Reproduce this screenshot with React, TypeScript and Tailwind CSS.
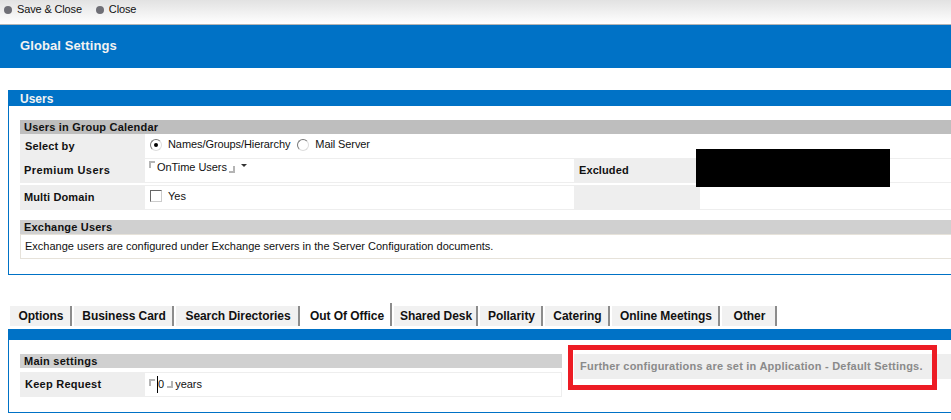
function CornerOpen() {
  return <span className="mb-[5px] mr-[2px] inline-block h-[7px] w-[6px] border-t-2 border-l-2 border-[#b4b4b4]" />;
}

function CornerClose() {
  return <span className="mt-[5px] ml-[2px] inline-block h-[7px] w-[6px] border-r-2 border-b-2 border-[#b4b4b4]" />;
}

function Radio({ checked }: { checked?: boolean }) {
  return (
    <span className="flex h-[12px] w-[12px] items-center justify-center rounded-full border border-t-[#777] border-l-[#777] border-r-[#ddd] border-b-[#ddd] bg-white">
      {checked && <span className="h-[4px] w-[4px] rounded-full bg-black" />}
    </span>
  );
}

const tabs = [
  { label: "Options", width: "w-[62px]" },
  { label: "Business Card", width: "w-[100px]" },
  { label: "Search Directories", width: "w-[124px]" },
  { label: "Out Of Office", width: "w-[90px]", active: true },
  { label: "Shared Desk", width: "w-[84px]" },
  { label: "Pollarity", width: "w-[63px]" },
  { label: "Catering", width: "w-[65px]" },
  { label: "Online Meetings", width: "w-[108px]" },
  { label: "Other", width: "w-[55px]" },
];

export default function App() {
  return (
    <div className="relative h-[420px] w-[951px] overflow-hidden bg-white font-['Liberation_Sans',Arial,sans-serif] text-[11px] text-[#111]">
      {/* Toolbar */}
      <div className="flex h-[25px] items-center border-b border-[#b5b5b5] bg-gradient-to-b from-[#e2e2e2] to-white pb-[5px] pl-[4px]">
        <span className="h-[8px] w-[8px] rounded-full bg-[#6f6f76]" />
        <span className="ml-[5px] tracking-[-0.15px]">Save &amp; Close</span>
        <span className="ml-[14px] h-[8px] w-[8px] rounded-full bg-[#6f6f76]" />
        <span className="ml-[5px] tracking-[-0.15px]">Close</span>
      </div>
      <div className="flex h-[43px] items-center bg-[#0072c6] pb-[1px] pl-[20px] text-[13px] font-bold tracking-[0.1px] text-[#f2f2f2]">
        Global Settings
      </div>

      {/* Users panel */}
      <div className="mt-[22px] ml-[8px] h-[185px] w-[960px] border-x border-b border-[#0072c6]">
        <div className="flex h-[16px] items-center bg-[#0072c6] pt-[1px] pl-[11px] text-[12px] font-bold text-[#f2f2f2]">Users</div>
        <div className="mt-[14px] ml-[11px]">
          <div className="flex h-[14px] items-center bg-[#bebebe] pl-[4px] font-bold tracking-[0.2px]">Users in Group Calendar</div>
          <div className="flex h-[24px]">
            <div className="flex w-[125px] items-center bg-[#eee] pl-[5px] font-bold tracking-[0.15px]">Select by</div>
            <div className="flex flex-1 items-center pb-[3px] pl-[5px]">
              <Radio checked />
              <span className="ml-[6px] tracking-[-0.08px]">Names/Groups/Hierarchy</span>
              <span className="ml-[7px]"><Radio /></span>
              <span className="ml-[6px] tracking-[-0.1px]">Mail Server</span>
            </div>
          </div>
          <div className="flex h-[25px]">
            <div className="flex w-[125px] items-center bg-[#eee] pl-[4px] font-bold tracking-[0.42px]">Premium Users</div>
            <div className="flex w-[429px] items-start border-y border-[#eee] pl-[4px]">
              <span className="flex items-center">
                <CornerOpen />
                <span className="tracking-[-0.05px]">OnTime Users</span>
                <CornerClose />
              </span>
              <span className="mt-[5px] ml-[6px] h-0 w-0 border-x-[3px] border-t-[3px] border-x-transparent border-t-[#333]" />
            </div>
            <div className="flex w-[126px] items-center bg-[#eee] pl-[5px] font-bold tracking-[0.1px]">Excluded</div>
            <div className="flex-1 border-y border-[#eee]" />
          </div>
          <div className="mt-[2px] flex h-[25px]">
            <div className="flex w-[125px] items-center bg-[#eee] pl-[4px] font-bold tracking-[0.12px]">Multi Domain</div>
            <div className="flex w-[429px] items-center border-y border-[#eee] pb-[3px] pl-[5px]">
              <span className="h-[12px] w-[12px] border border-t-[#666] border-l-[#666] border-r-[#ccc] border-b-[#ccc] bg-white" />
              <span className="ml-[6px]">Yes</span>
            </div>
            <div className="w-[126px] bg-[#eee]" />
            <div className="flex-1 border-b border-[#eee]" />
          </div>
          <div className="mt-[10px] flex h-[14px] items-center bg-[#d0d0d0] pl-[4px] font-bold tracking-[0.2px]">Exchange Users</div>
          <div className="flex h-[25px] items-center border-x border-y border-[#e6e2da] pl-[4px]">
            Exchange users are configured under Exchange servers in the Server Configuration documents.
          </div>
        </div>
      </div>

      {/* Tabs */}
      <div className="mt-[29px] ml-[10px] flex h-[22px] items-end gap-[2px]">
        {tabs.map(tab => (
          <div
            key={tab.label}
            className={
              tab.active
                ? "flex h-[23px] w-[90px] items-center justify-center border-r-2 border-[#8c8c8c] bg-white pt-[3px] pl-[2px] text-[12px] font-bold tracking-[-0.05px]"
                : `flex h-[20px] ${tab.width} items-center justify-center border-r-2 border-[#8c8c8c] bg-[#f1f1f1] pl-[2px] text-[12px] font-bold tracking-[-0.05px]`
            }
          >
            {tab.label}
          </div>
        ))}
      </div>

      {/* Tab panel */}
      <div className="mt-[3px] ml-[8px] h-[84px] w-[960px] border-x border-b border-[#0072c6]">
        <div className="h-[11px] bg-[#0072c6]" />
        <div className="mt-[14px] ml-[11px] flex gap-[12px]">
          <div className="w-[542px]">
            <div className="flex h-[14px] items-center bg-[#d0d0d0] pl-[4px] font-bold tracking-[0.25px]">Main settings</div>
            <div className="mt-[4px] flex h-[25px] border-y border-r border-[#eee]">
              <div className="flex w-[125px] items-center bg-[#eee] pl-[5px] font-bold tracking-[0.25px]">Keep Request</div>
              <div className="flex items-center pl-[4px]">
                <CornerOpen />
                <span className="border-l border-black">0</span>
                <span className="ml-[1px]"><CornerClose /></span>
                <span className="ml-[2px]">years</span>
              </div>
            </div>
          </div>
          <div className="flex h-[25px] flex-1 items-center bg-[#eee] pl-[6px] font-bold tracking-[0.22px] text-[#8a8a8a]">
            Further configurations are set in Application - Default Settings.
          </div>
        </div>
      </div>

      {/* Annotations drawn over the screenshot */}
      <div className="absolute top-[149px] left-[696px] h-[38px] w-[194px] bg-black" />
      <div className="absolute top-[345px] left-[568px] h-[45px] w-[369px] border-[5px] border-[#ed1c24]" />
    </div>
  );
}
